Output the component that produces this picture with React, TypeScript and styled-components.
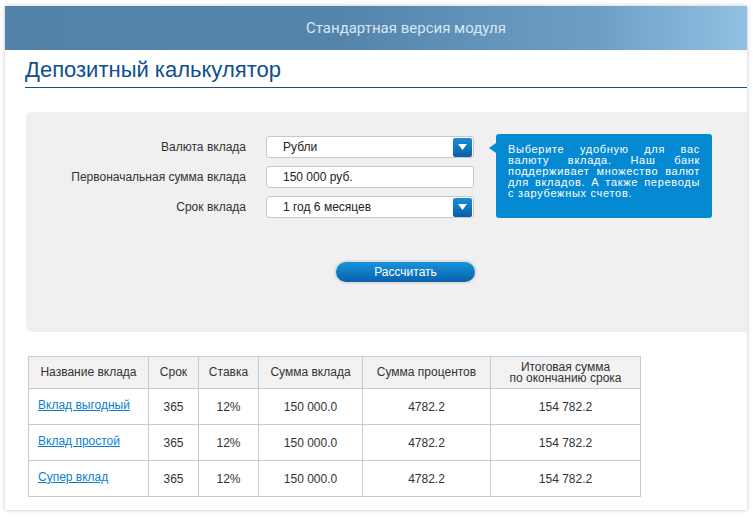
import React from "react";
import styled, { createGlobalStyle } from "styled-components";

const G = createGlobalStyle`
  body{margin:0;background:#fff;font-family:"Liberation Sans",Arial,sans-serif;}
`;
const Page = styled.div`padding:6px 6px 7px 5px;`;
const Card = styled.div`
  height:504px;box-shadow:0 0 4px rgba(0,0,0,.25);background:#fff;display:flex;flex-direction:column;
`;
const Header = styled.div`
  height:44px;background:linear-gradient(90deg,#5282aa 0%,#5584ab 45%,#6d9fc6 80%,#92c0e2 100%);
  display:flex;align-items:center;justify-content:center;color:#d8e6f2;
  font-family:"Roboto","Open Sans",sans-serif;font-size:15px;padding-left:60px;
`;
const Body = styled.div`padding:5px 0 0 20px;`;
const Title = styled.h1`
  margin:0;font-weight:normal;font-size:22px;color:#0d4f8f;line-height:30px;height:32px;
  border-bottom:1px solid #1a4f85;font-family:"Liberation Sans",sans-serif;
`;
const Panel = styled.div`
  margin:24px 0 0 1px;height:220px;background:#f0f0f0;border-radius:6px 0 0 6px;position:relative;
  display:flex;flex-direction:column;
`;
const Form = styled.div`display:flex;padding:24px 0 0 0;`;
const Fields = styled.div`display:grid;grid-template-columns:220px 208px;column-gap:20px;row-gap:8px;`;
const Label = styled.div`font-size:12px;color:#333;text-align:right;line-height:22px;`;
const Input = styled.div`
  height:20px;border:1px solid #c8c8c8;background:#fff;border-radius:3px;display:flex;align-items:center;
  justify-content:space-between;padding-left:16px;font-size:12px;color:#222;
`;
const Drop = styled.div`
  width:19px;height:19px;margin-right:1px;border-radius:2px;background:linear-gradient(#1a8ed8,#0a5ea8);
  display:flex;align-items:center;justify-content:center;
`;
const Tip = styled.div`
  margin-left:22px;margin-top:-2px;width:216px;height:84px;box-sizing:border-box;background:#0589d2;border-radius:3px;
  color:#fff;font-size:11px;line-height:11px;padding:10px 12px;text-align:justify;position:relative;letter-spacing:.7px;
  &:before{content:"";position:absolute;left:-7px;top:9px;border:5px solid transparent;border-right:7px solid #0589d2;border-left:0;}
`;
const BtnRow = styled.div`display:flex;padding:42px 0 0 308px;`;
const Btn = styled.div`
  width:139px;height:20px;border-radius:12px;background:linear-gradient(#1694dc,#0861aa);
  border:2px solid #ddd;color:#fff;font-size:12px;display:flex;align-items:center;justify-content:center;
`;
const Table = styled.table`
  margin:24px 0 0 3px;border-collapse:collapse;width:613px;font-size:12px;color:#333;
  td,th{border:1px solid #c2ccd6;text-align:center;padding:0;}
  th{font-weight:normal;background:#f2f2f2;height:31px;line-height:11px;}
  td{height:31px;}
`;
const Link = styled.a`color:#0a7fd0;text-decoration:underline;`;
const NameTd = styled.td`&&{text-align:left;padding:0 0 4px 9px;}`;

const Arrow = () => (<svg width="9" height="6" viewBox="0 0 9 6"><path d="M0 0h9L4.5 6z" fill="#fff"/></svg>);
const rows = ["Вклад выгодный","Вклад простой","Супер вклад"];

export default function App(){
  return (<Page><G/><Card>
    <Header>Стандартная версия модуля</Header>
    <Body>
      <Title>Депозитный калькулятор</Title>
      <Panel>
        <Form>
          <Fields>
            <Label>Валюта вклада</Label><Input>Рубли<Drop><Arrow/></Drop></Input>
            <Label>Первоначальная сумма вклада</Label><Input>150 000 руб.</Input>
            <Label>Срок вклада</Label><Input>1 год 6 месяцев<Drop><Arrow/></Drop></Input>
          </Fields>
          <Tip>Выберите удобную для вас валюту вклада. Наш банк поддерживает множество валют для вкладов. А также переводы с зарубежных счетов.</Tip>
        </Form>
        <BtnRow><Btn>Рассчитать</Btn></BtnRow>
      </Panel>
      <Table>
        <colgroup><col width="120"/><col width="50"/><col width="60"/><col width="104"/><col width="128"/><col width="150"/></colgroup>
        <thead><tr><th>Название вклада</th><th>Срок</th><th>Ставка</th><th>Сумма вклада</th><th>Сумма процентов</th><th>Итоговая сумма<br/>по окончанию срока</th></tr></thead>
        <tbody>{rows.map(r=>(<tr key={r}><NameTd><Link>{r}</Link></NameTd><td>365</td><td>12%</td><td>150 000.0</td><td>4782.2</td><td>154 782.2</td></tr>))}</tbody>
      </Table>
    </Body>
  </Card></Page>);
}
